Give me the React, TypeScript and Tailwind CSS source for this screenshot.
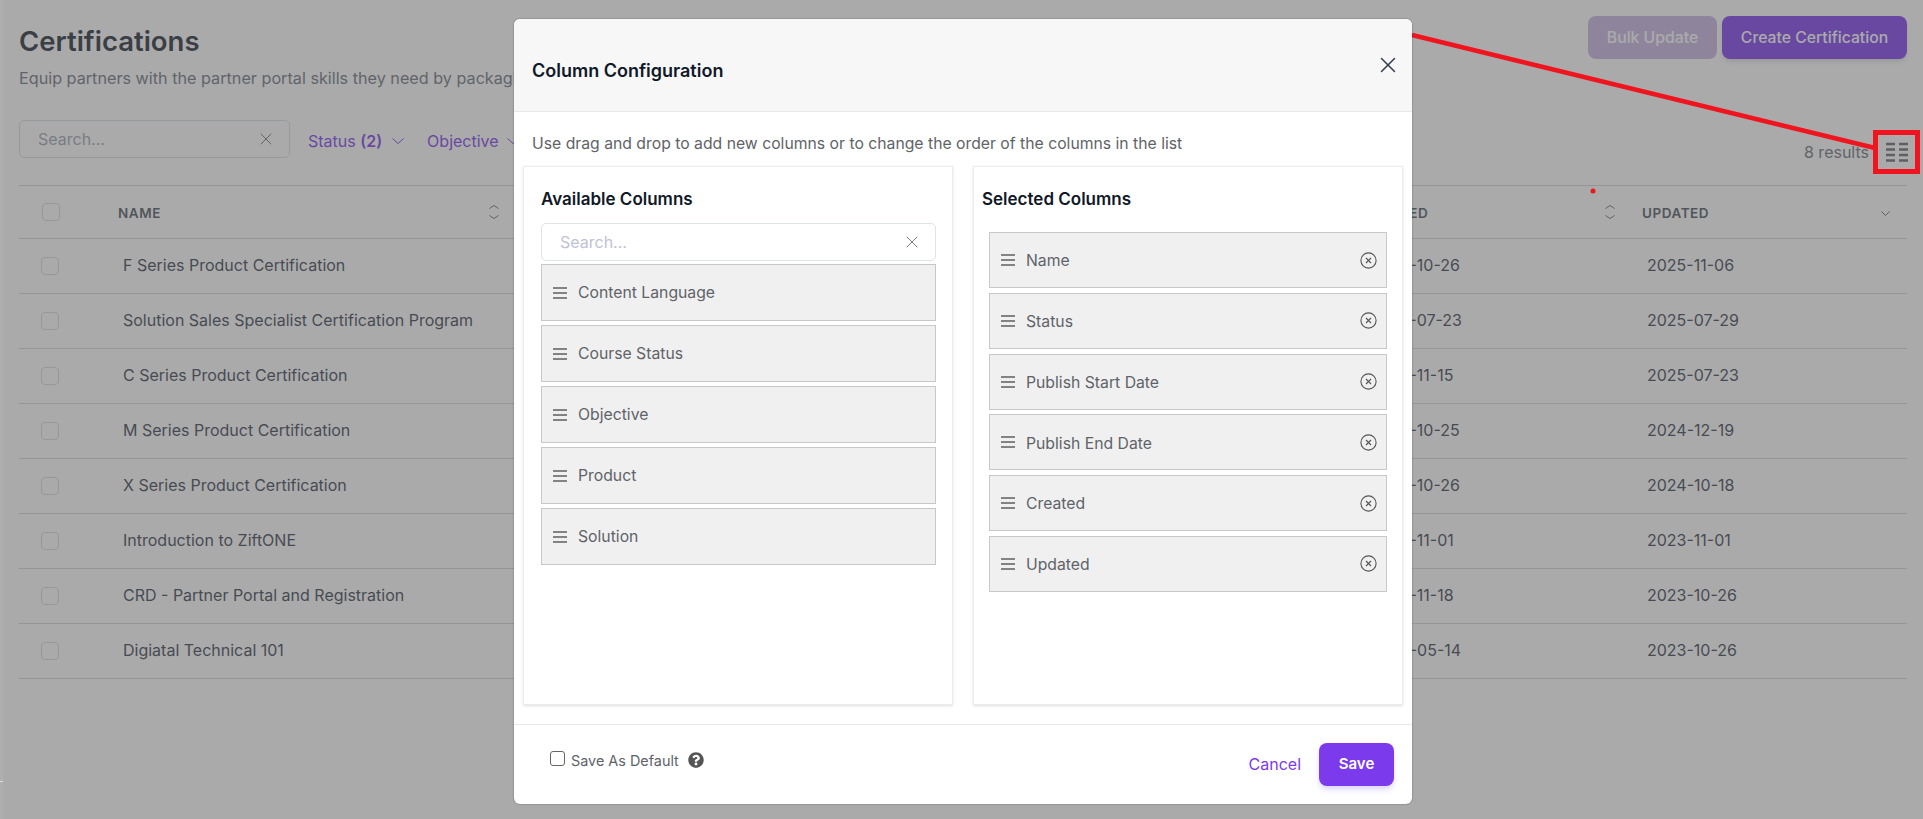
import React from "react";
import { X } from "lucide-react";
import { FaQuestionCircle } from "react-icons/fa";

const rows = [
  ["F Series Product Certification", "2023-10-26", "2025-11-06"],
  ["Solution Sales Specialist Certification Program", "2025-07-23", "2025-07-29"],
  ["C Series Product Certification", "2023-11-15", "2025-07-23"],
  ["M Series Product Certification", "2023-10-25", "2024-12-19"],
  ["X Series Product Certification", "2023-10-26", "2024-10-18"],
  ["Introduction to ZiftONE", "2023-11-01", "2023-11-01"],
  ["CRD - Partner Portal and Registration", "2023-11-18", "2023-10-26"],
  ["Digiatal Technical 101", "2024-05-14", "2023-10-26"],
];

const available = ["Content Language", "Course Status", "Objective", "Product", "Solution"];
const selected = ["Name", "Status", "Publish Start Date", "Publish End Date", "Created", "Updated"];

function Grip() {
  return (
    <svg width="14" height="12" viewBox="0 0 14 12" className="shrink-0" fill="none" stroke="#5f5f63" strokeWidth="1.4">
      <path d="M0 1h14M0 6h14M0 11h14" />
    </svg>
  );
}

function Chev({ w, h, up, className }: { w: number; h: number; up?: boolean; className?: string }) {
  const d = up ? `M.5 ${h - 0.5}L${w / 2} .5L${w - 0.5} ${h - 0.5}` : `M.5 .5L${w / 2} ${h - 0.5}L${w - 0.5} .5`;
  return (
    <svg width={w} height={h} viewBox={`0 0 ${w} ${h}`} fill="none" stroke="currentColor" strokeWidth="1" className={"shrink-0 " + (className ?? "")}>
      <path d={d} />
    </svg>
  );
}

function Sort() {
  return (
    <span className="flex w-[13px] flex-col items-center gap-[6px] text-[#6b6b70]">
      <Chev w={10} h={4} up />
      <Chev w={10} h={4} />
    </span>
  );
}

function RemoveIcon() {
  return (
    <svg width="17" height="17" viewBox="0 0 17 17" fill="none" stroke="#555" strokeWidth="1.1" className="shrink-0">
      <circle cx="8.500" cy="8.500" r="7.600" />
      <path d="M6 6l5 5M11 6l-5 5" />
    </svg>
  );
}

function Box() {
  return <span className="block h-[18px] w-[18px] shrink-0 rounded-[4px] border border-[#d5dbe0]" />;
}

export default function App() {
  return (
    <div className="relative flex h-[819px] w-[1923px] overflow-hidden bg-white font-['Inter',sans-serif] text-[16px] text-[#374151]">
      <main className="ml-[3px] flex-1 pr-[16px] pl-[16px]">
        <div className="flex h-[120px] items-start justify-between pt-4">
          <div>
            <h1 className="mt-[9px] text-[27.500px] leading-[32px] font-semibold text-[#1f2937]">Certifications</h1>
            <p className="mt-[11px] text-[16.200px] leading-5 whitespace-nowrap text-[#6b7280]">
              Equip partners with the partner portal skills they need by packaging
            </p>
          </div>
          <div className="flex gap-[5px]">
            <button className="h-[43px] w-[129px] rounded-[8px] bg-[#c7b5e5] text-[15.750px] font-medium text-white">Bulk Update</button>
            <button className="h-[43px] w-[185px] rounded-[8px] bg-[#7c3aed] text-[15.750px] font-medium text-white shadow-md">Create Certification</button>
          </div>
        </div>

        <div className="flex h-[38px] items-center">
          <div className="flex h-[38px] w-[271px] items-center justify-between rounded-[5px] border border-[#d9dfe4] pr-[13px] pl-[18px]">
            <span className="text-[#9ca3af]">Search...</span>
            <X size={20} strokeWidth={1.2} className="text-[#6b7280]" />
          </div>
          <span className="mt-[3px] ml-[18px] flex items-center gap-[10px] text-[#7c3aed]">
            <span>Status <b className="font-semibold">(2)</b></span>
            <Chev w={12} h={6} />
          </span>
          <span className="mt-[3px] ml-[23px] flex items-center gap-[8px] text-[#7c3aed]">
            Objective
            <Chev w={12} h={6} />
          </span>
          <span className="mt-[26px] ml-auto pr-[38px] text-[#6b7280]">8 results</span>
        </div>

        <div className="mt-[27px] w-[1888px] border-t border-[#d5d6da]">
          <div className="flex h-[53px] items-center border-b border-[#d5d6da] text-[13.500px] font-semibold tracking-[0.04em] text-[#4b5563]">
            <span className="w-[23px]" />
            <Box />
            <span className="mt-[2px] ml-[58px] w-[369px]">NAME</span>
            <Sort />
            <span className="mt-[2px] ml-[862px] w-[241px]">CREATED</span>
            <Sort />
            <span className="mt-[2px] ml-[26px] w-[239px]">UPDATED</span>
            <Chev w={9} h={5} className="mt-[2px] text-[#6b6b70]" />
          </div>
          {rows.map((r) => (
            <div key={r[0]} className="flex h-[55px] items-center border-b border-[#d5d6da]">
              <span className="w-[22px]" />
              <Box />
              <span className="-mt-[2px] ml-[64px] w-[1247px] truncate">{r[0]}</span>
              <span className="-mt-[2px] w-[277px]">{r[1]}</span>
              <span className="-mt-[2px]">{r[2]}</span>
            </div>
          ))}
        </div>
      </main>

      <div className="absolute inset-0 bg-[#555555]/50" />
      <div className="absolute inset-y-0 left-0 w-[3px] bg-[#afafaf]" />
      <div className="absolute top-[781px] left-0 h-px w-[3px] bg-[#dddddd]" />

      <svg className="absolute inset-0" width="1923" height="819" fill="none">
        <path d="M1412 35L1875 148" stroke="#f0141e" strokeWidth="4.500" />
        <rect x="1875.500" y="132.500" width="42" height="39" stroke="#f0141e" strokeWidth="5" />
        <circle cx="1593" cy="191" r="2.500" fill="#f0141e" />
        <path d="M1886 144h9M1899 144h9M1886 149.500h9M1899 149.500h9M1886 155h9M1899 155h9M1886 160.500h9M1899 160.500h9" stroke="#5f5f63" strokeWidth="2.500" />
      </svg>

      <div className="absolute top-[19px] left-[514px] flex h-[785px] w-[898px] flex-col rounded-[6px] bg-white shadow-[0_0_2px_rgba(0,0,0,0.4)]">
        <div className="flex h-[93px] shrink-0 items-center justify-between rounded-t-[6px] border-b border-[#e8e8e8] bg-[#f7f7f7] pr-[11px] pl-[18px]">
          <h2 className="mt-[10px] text-[18px] font-semibold text-[#111827]">Column Configuration</h2>
          <X size={26} strokeWidth={1.4} className="-mt-[1px] text-[#374151]" />
        </div>
        <p className="mx-[18px] mt-[22px] text-[15.750px] leading-5 text-[#5f6368]">
          Use drag and drop to add new columns or to change the order of the columns in the list
        </p>
        <div className="mx-[9px] mt-[12px] flex gap-[20px]">
          <section className="h-[539px] w-[430px] border border-[#ececec] pt-[22px] pr-[16px] pl-[17px] shadow-sm">
            <h3 className="text-[17px] leading-5 font-semibold text-[#111827]">Available Columns</h3>
            <div className="mt-[14px] flex h-[38px] items-center justify-between rounded-[5px] border border-[#dde3e6] pr-[13px] pl-[18px]">
              <span className="text-[#c0c2d6]">Search...</span>
              <X size={20} strokeWidth={1.1} className="text-[#6b7280]" />
            </div>
            <div className="mt-[3px] flex flex-col gap-[4px]">
              {available.map((a) => (
                <div key={a} className="flex h-[57px] items-center gap-[11px] border-[1.5px] border-[#c8c8c8] bg-[#f0f0f0] pl-[11px] text-[15.750px] text-[#5f6368]">
                  <Grip />
                  <span className="mt-[1px]">{a}</span>
                </div>
              ))}
            </div>
          </section>
          <section className="h-[539px] w-[430px] border border-[#ececec] pt-[22px] pr-[15px] pl-[8px] shadow-sm">
            <h3 className="text-[17px] leading-5 font-semibold text-[#111827]">Selected Columns</h3>
            <div className="mt-[23px] ml-[7px] flex flex-col gap-[4.800px]">
              {selected.map((s) => (
                <div key={s} className="flex h-[56px] items-center gap-[11px] border-[1.5px] border-[#c8c8c8] bg-[#f0f0f0] pr-[9px] pl-[11px] text-[15.750px] text-[#5f6368]">
                  <Grip />
                  <span className="mt-[2px] flex-1">{s}</span>
                  <RemoveIcon />
                </div>
              ))}
            </div>
          </section>
        </div>
        <div className="mt-[19px] flex flex-1 items-start border-t border-[#e8e8e8] pr-[18px] pl-[36px]">
          <span className="mt-[26px] block h-[15px] w-[15px] rounded-[3px] border border-[#666]" />
          <span className="mt-[26px] ml-[6px] text-[14.400px] leading-5 text-[#5f6368]">Save As Default</span>
          <FaQuestionCircle size={16} className="mt-[27px] ml-[9px] text-[#555]" />
          <span className="mt-[29px] ml-auto text-[16px] leading-5 text-[#7c3aed]">Cancel</span>
          <button className="mt-[18px] ml-[18px] h-[43px] w-[75px] rounded-[8px] bg-[#7c3aed] text-[15px] font-semibold text-white shadow-md shadow-violet-200">Save</button>
        </div>
      </div>
    </div>
  );
}
